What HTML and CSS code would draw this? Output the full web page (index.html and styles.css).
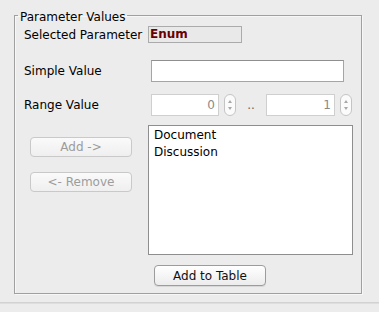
FILE: index.html
```html
<!DOCTYPE html>
<html>
<head>
<meta charset="utf-8">
<link rel="stylesheet" href="styles.css">
</head>
<body>
<div class="panel">
  <fieldset class="group">
    <legend class="group-title">Parameter Values</legend>
    <div class="row row-sel">
      <span class="lbl">Selected Parameter</span>
      <span class="enum">Enum</span>
    </div>
    <div class="row row-simple">
      <span class="lbl">Simple Value</span>
      <input class="text-in" type="text">
    </div>
    <div class="row row-range">
      <span class="lbl">Range Value</span>
      <div class="range">
        <input class="num-in num-a" type="text" value="0" disabled>
        <svg class="spin" width="12" height="22" viewBox="0 0 12 22">
          <rect x="0.5" y="0.5" width="11" height="21" rx="5.5" fill="#fbfbfb" stroke="#c4c4c4"/>
          <path d="M4 9 L6 6 L8 9 Z" fill="#a8a8a8"/>
          <path d="M4 13 L6 16 L8 13 Z" fill="#a8a8a8"/>
        </svg>
        <span class="dots">..</span>
        <input class="num-in num-b" type="text" value="1" disabled>
        <svg class="spin" width="12" height="22" viewBox="0 0 12 22">
          <rect x="0.5" y="0.5" width="11" height="21" rx="5.5" fill="#fbfbfb" stroke="#c4c4c4"/>
          <path d="M4 9 L6 6 L8 9 Z" fill="#a8a8a8"/>
          <path d="M4 13 L6 16 L8 13 Z" fill="#a8a8a8"/>
        </svg>
      </div>
    </div>
    <div class="row row-list">
      <div class="btn-col">
        <button class="btn btn-side" disabled>Add -&gt;</button>
        <button class="btn btn-side" disabled>&lt;- Remove</button>
      </div>
      <ul class="list">
        <li>Document</li>
        <li>Discussion</li>
      </ul>
    </div>
    <div class="row row-add">
      <button class="btn btn-table">Add to Table</button>
    </div>
  </fieldset>
  <div class="separator"></div>
</div>
</body>
</html>
```

FILE: styles.css
```css
html, body {
  margin: 0;
  padding: 0;
  background: #ececec;
}
body {
  font-family: "DejaVu Sans", sans-serif;
  font-size: 12px;
  color: #000;
}
.panel {
  width: 379px;
  height: 312px;
  overflow: hidden;
}
.group {
  box-sizing: border-box;
  width: 348px;
  margin: 7px 0 0 14px;
  padding: 0 0 7px 9px;
  border: 1px solid #a0a0a0;
  box-shadow: 1px 1px 0 #f7f7f7, inset 1px 1px 0 #f7f7f7;
  min-width: 0;
}
.group-title {
  margin-left: -6px;
  padding: 3px 2px 0 2px;
  line-height: 14px;
  height: 14px;
}
.row {
  display: flex;
  align-items: center;
}
.lbl {
  width: 124px;
  flex: none;
  line-height: 14px;
}
.row-sel {
  margin-top: 2px;
  height: 17px;
}
.enum {
  box-sizing: border-box;
  width: 94px;
  height: 17px;
  border: 1px solid #ababab;
  background: #e9e9e9;
  color: #6a0000;
  font-weight: bold;
  line-height: 15px;
  padding-left: 1px;
}
.row-simple {
  margin-top: 17px;
  height: 22px;
}
.text-in {
  box-sizing: border-box;
  width: 193px;
  height: 22px;
  margin: 0 0 0 3px;
  padding: 0 3px;
  border: 1px solid #a5a5a5;
  border-top-color: #8f8f8f;
  background: #fff;
  font: inherit;
  outline: none;
}
.row-range {
  margin-top: 12px;
  height: 22px;
}
.range {
  display: flex;
  align-items: center;
  margin-left: 3px;
}
.num-in {
  box-sizing: border-box;
  height: 22px;
  margin: 0;
  padding: 0 3px;
  border: 1px solid #cfcfcf;
  background: #fff;
  color: #8a8a8a;
  font: inherit;
  text-align: right;
  outline: none;
}
.num-a { width: 68px; }
.num-b { width: 69px; }
.spin {
  display: block;
  margin-left: 5px;
}
.dots {
  width: 30px;
  text-align: center;
  color: #666;
  line-height: 14px;
}
.row-list {
  margin-top: 9px;
  height: 130px;
  align-items: flex-start;
}
.btn-col {
  width: 124px;
  flex: none;
  display: flex;
  flex-direction: column;
  gap: 15px;
  padding-top: 12px;
}
.btn {
  box-sizing: border-box;
  margin: 0;
  font: inherit;
  line-height: 14px;
  border-radius: 4px;
  padding: 0;
}
.btn-side {
  width: 102px;
  height: 20px;
  margin-left: 6px;
  border: 1px solid #c9c9c9;
  background: linear-gradient(#fafafa, #efefef);
  color: #9c9c9c;
}
.list {
  box-sizing: border-box;
  width: 205px;
  height: 130px;
  margin: 0;
  padding: 1px 5px;
  list-style: none;
  border: 1px solid #8e8e8e;
  background: #fff;
}
.list li {
  line-height: 17px;
}
.row-add {
  margin-top: 10px;
  height: 21px;
}
.btn-table {
  width: 112px;
  height: 21px;
  margin-left: 130px;
  border: 1px solid #9c9c9c;
  background: linear-gradient(#ffffff, #ececec);
  color: #111;
  box-shadow: 0 1px 0 #d8d8d8;
}
.separator {
  margin-top: 8px;
  height: 1px;
  background: #d2d2d2;
  border-bottom: 1px solid #dedede;
}
```
